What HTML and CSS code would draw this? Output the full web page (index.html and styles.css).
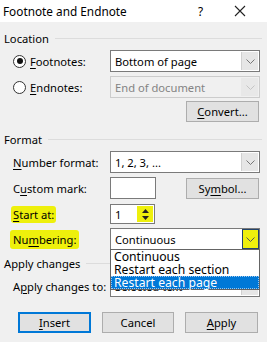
FILE: index.html
```html
<!DOCTYPE html>
<html lang="en">
  <head>
    <meta charset="UTF-8" />
    <title>Footnote and Endnote</title>
    <link rel="stylesheet" href="styles.css">
  </head>
  <body>
    <div class="titlebar">
      <span class="title">Footnote and Endnote</span>
      <span class="help">?</span>
      <svg class="close" width="12" height="12" viewBox="0 0 12 12">
        <path d="M1 1 L11 11 M11 1 L1 11" stroke="#222" stroke-width="1.1" fill="none" />
      </svg>
    </div>

    <div class="dialog">
      <div class="group-title">Location</div>

      <div class="row">
        <span class="radio checked"></span>
        <span class="label radio-label"><u>F</u>ootnotes:</span>
        <div class="combo">
          <span class="combo-text">Bottom of page</span>
          <span class="combo-btn"><svg width="9" height="5" viewBox="0 0 9 5"><path d="M0.5 0.5 L4.5 4.5 L8.5 0.5" stroke="#777" fill="none" /></svg></span>
        </div>
      </div>

      <div class="row">
        <span class="radio"></span>
        <span class="label radio-label"><u>E</u>ndnotes:</span>
        <div class="combo disabled">
          <span class="combo-text">End of document</span>
          <span class="combo-btn"><svg width="9" height="5" viewBox="0 0 9 5"><path d="M0.5 0.5 L4.5 4.5 L8.5 0.5" stroke="#c4c4c4" fill="none" /></svg></span>
        </div>
      </div>

      <div class="row right convert-row">
        <button class="btn"><u>C</u>onvert...</button>
      </div>

      <div class="group-title format-title">Format</div>

      <div class="row">
        <span class="label"><u>N</u>umber format:</span>
        <div class="combo">
          <span class="combo-text">1, 2, 3, ...</span>
          <span class="combo-btn"><svg width="9" height="5" viewBox="0 0 9 5"><path d="M0.5 0.5 L4.5 4.5 L8.5 0.5" stroke="#777" fill="none" /></svg></span>
        </div>
      </div>

      <div class="row">
        <span class="label">C<u>u</u>stom mark:</span>
        <div class="textbox mark"></div>
        <button class="btn symbol">Sy<u>m</u>bol...</button>
      </div>

      <div class="row start-row">
        <span class="label"><span class="marker"><u>S</u>tart at:</span></span>
        <div class="textbox spin">
          <span class="spin-text">1</span>
          <span class="spin-btn">
            <svg width="7" height="4" viewBox="0 0 7 4"><path d="M0 4 L3.5 0 L7 4 Z" fill="#222" /></svg>
            <svg width="7" height="4" viewBox="0 0 7 4"><path d="M0 0 L3.5 4 L7 0 Z" fill="#222" /></svg>
          </span>
        </div>
      </div>

      <div class="row">
        <span class="label"><span class="marker wide">Nu<u>m</u>bering:</span></span>
        <div class="combo open">
          <span class="combo-text">Continuous</span>
          <span class="combo-btn active"><svg width="9" height="5" viewBox="0 0 9 5"><path d="M0.5 0.5 L4.5 4.5 L8.5 0.5" stroke="#555" fill="none" /></svg></span>
          <ul class="dropdown">
            <li>Continuous</li>
            <li>Restart each section</li>
            <li class="selected">Restart each page</li>
          </ul>
        </div>
      </div>

      <div class="group-title apply-title">Apply changes</div>

      <div class="row">
        <span class="label">A<u>p</u>ply changes to:</span>
        <div class="combo">
          <span class="combo-text">Selected text</span>
          <span class="combo-btn"><svg width="9" height="5" viewBox="0 0 9 5"><path d="M0.5 0.5 L4.5 4.5 L8.5 0.5" stroke="#777" fill="none" /></svg></span>
        </div>
      </div>

      <div class="buttons">
        <button class="btn default"><u>I</u>nsert</button>
        <button class="btn cancel">Cancel</button>
        <button class="btn"><u>A</u>pply</button>
      </div>
    </div>
  </body>
</html>
```

FILE: styles.css
```css
:root {
  --face: #f0f0f0;
  --border: #adadad;
  --text: #000;
  --marker: #eef00c;
  --select: #0078d7;
}

* {
  margin: 0;
  padding: 0;
  box-sizing: border-box;
}

body {
  width: 267px;
  height: 342px;
  overflow: hidden;
  background-color: var(--face);
  color: var(--text);
  font-family: "Segoe UI", "Noto Sans", "Open Sans", sans-serif;
  font-size: 11.2px;
}

u {
  text-decoration-thickness: 1px;
  text-underline-offset: 2px;
}

.titlebar {
  height: 22px;
  background-color: #fff;
  display: flex;
  align-items: center;
  padding-left: 3px;
}

.title {
  flex: 1;
  font-size: 11.8px;
}

.help {
  font-size: 11.8px;
  margin-right: 31px;
}

.close {
  margin-right: 21px;
}

.dialog {
  position: relative;
}

.group-title {
  display: flex;
  align-items: center;
  gap: 6px;
  height: 16px;
  margin-top: 8px;
  padding-left: 4px;
  padding-right: 5px;
}

.group-title::after {
  content: "";
  flex: 1;
  border-top: 1px solid #dcdcdc;
}

.format-title {
  margin-top: 9px;
}

.apply-title {
  margin-top: 5px;
}

.apply-title::after {
  margin-right: 150px;
}

.row {
  display: flex;
  align-items: center;
  height: 22px;
  margin-top: 4px;
  padding-left: 13px;
}

.row.right {
  justify-content: flex-end;
  padding-right: 8px;
}

.convert-row {
  margin-top: 3px;
  height: 21px;
}

.label {
  width: 97px;
  white-space: nowrap;
}

.radio {
  width: 13px;
  height: 13px;
  border: 1px solid #333;
  border-radius: 50%;
  background-color: #fff;
  margin-right: 4px;
  position: relative;
  flex-shrink: 0;
}

.radio.checked::after {
  content: "";
  position: absolute;
  left: 2.5px;
  top: 2.5px;
  width: 6px;
  height: 6px;
  border-radius: 50%;
  background-color: #111;
}

.radio-label {
  width: 80px;
}

.combo {
  width: 150px;
  height: 22px;
  border: 1px solid #7a7a7a;
  background-color: #fff;
  display: flex;
  align-items: stretch;
  position: relative;
}

.combo-text {
  flex: 1;
  padding-left: 4px;
  display: flex;
  align-items: center;
}

.combo-btn {
  width: 17px;
  margin: 1px;
  background-color: #e6e6e6;
  border-left: 1px solid #d0d0d0;
  display: flex;
  align-items: center;
  justify-content: center;
}

.combo.disabled {
  background-color: var(--face);
  border-color: #cccccc;
  color: #838383;
}

.combo.disabled .combo-btn {
  background-color: #e8e8e8;
  border-left-color: #e8e8e8;
}

.combo-btn.active {
  background-color: var(--marker);
  border: 1px solid #22436b;
  margin: 0;
  width: 17px;
}

.dropdown {
  list-style: none;
  position: absolute;
  left: -1px;
  top: 20px;
  width: 150px;
  background-color: #fff;
  border: 1px solid #646464;
  z-index: 2;
}

.dropdown li {
  height: 13px;
  line-height: 13px;
  padding-left: 3px;
  font-size: 12.2px;
}

.dropdown li.selected {
  background-color: var(--select);
  color: #fff;
  outline: 1px dotted #9bc7f0;
  outline-offset: -1px;
}

.textbox {
  height: 22px;
  background-color: #fff;
  border: 1px solid #7a7a7a;
}

.mark {
  width: 46px;
}

.btn {
  height: 21px;
  width: 73px;
  background-color: #e1e1e1;
  border: 1px solid var(--border);
  font-family: inherit;
  font-size: 11.2px;
  color: var(--text);
}

.symbol {
  margin-left: 30px;
}

.start-row {
  margin-top: 5px;
  height: 20px;
}

.spin {
  width: 45px;
  height: 20px;
  display: flex;
  align-items: stretch;
}

.spin-text {
  flex: 1;
  padding-left: 4px;
  display: flex;
  align-items: center;
}

.spin-btn {
  width: 16px;
  margin: 1px;
  background-color: var(--marker);
  display: flex;
  flex-direction: column;
  align-items: center;
  justify-content: center;
  gap: 3px;
}

.marker {
  background-color: var(--marker);
  border-radius: 3px;
  padding: 1px 2px;
  margin-left: -2px;
}

.marker.wide {
  padding: 2px 3px 2px 3px;
  margin-left: -3px;
}

.buttons {
  display: flex;
  gap: 11px;
  padding-left: 18px;
  margin-top: 15px;
}

.btn.default {
  border: 2px solid var(--select);
}

.cancel {
  width: 72px;
}
```
